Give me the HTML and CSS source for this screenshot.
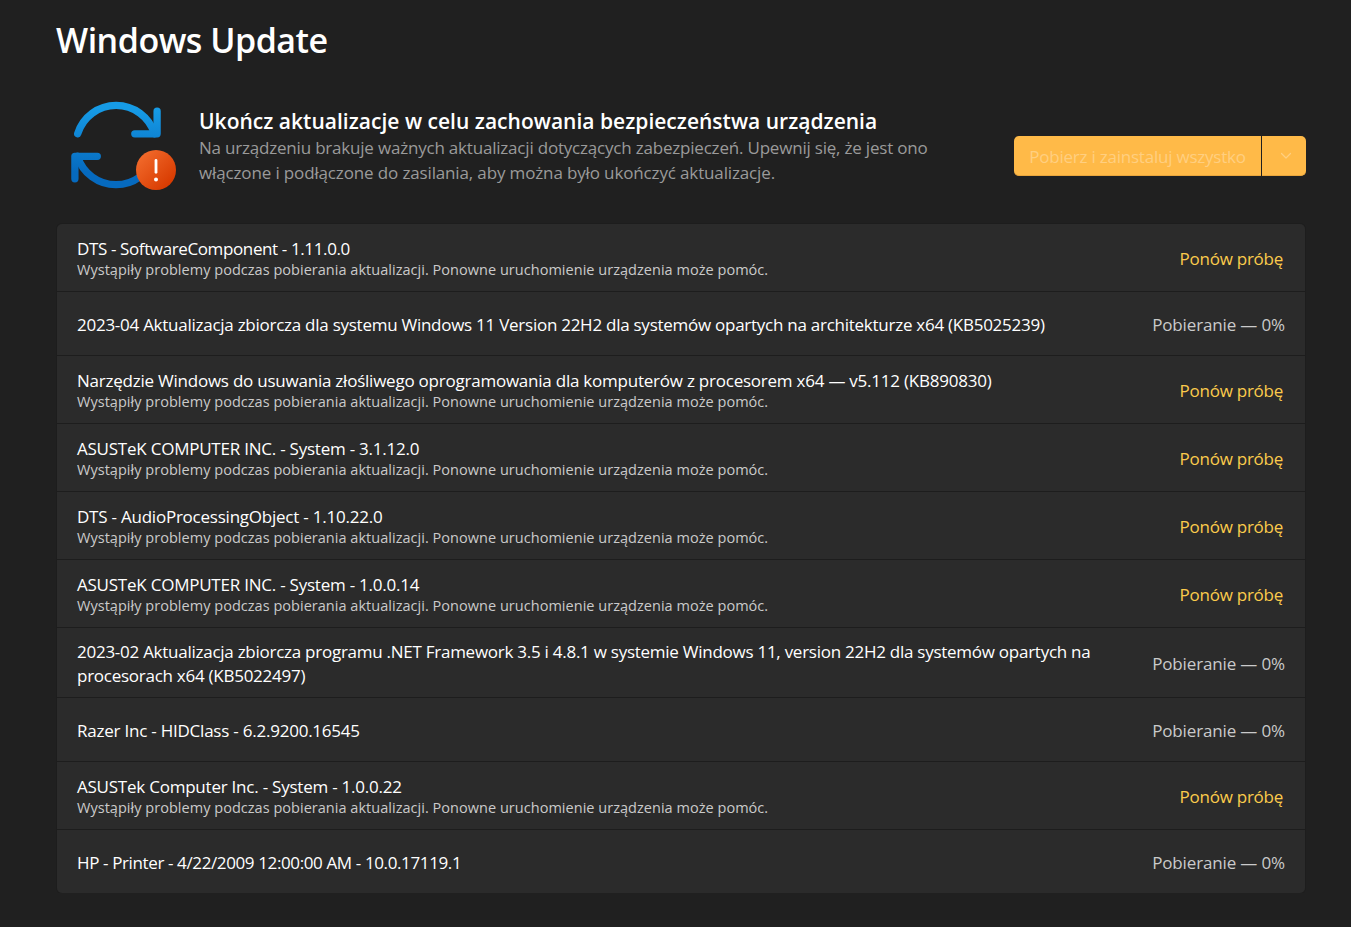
FILE: index.html
```
<!DOCTYPE html>
<html lang="pl">
<head>
  <meta charset="UTF-8">
  <meta name="viewport" content="width=device-width, initial-scale=1.0">
  <title>Windows Update</title>
  <link rel="stylesheet" href="styles.css">
</head>
<body>
  <h1>Windows Update</h1>

  <!-- Status header -->
  <header class="status">
    <svg class="status-icon" width="108" height="92" viewBox="0 0 108 92" fill="none">
      <defs>
        <linearGradient id="blue" gradientUnits="userSpaceOnUse" x1="0" y1="0" x2="0" y2="90">
          <stop offset="0.1" stop-color="#169be6"/>
          <stop offset="0.8" stop-color="#066abf"/>
        </linearGradient>
        <linearGradient id="orange" x1="0" y1="0" x2="1" y2="1">
          <stop offset="0.1" stop-color="#f26b2c"/>
          <stop offset="0.85" stop-color="#d83b01"/>
        </linearGradient>
      </defs>
      <g stroke="url(#blue)" stroke-width="7.3" stroke-linecap="round" stroke-linejoin="round">
        <path d="M7.7 33.7A40.2 40.2 0 0 1 84.5 33.7"/>
        <path d="M87.1 11.2V33.8H64.8"/>
        <path d="M7.5 56.3A40.3 40.3 0 0 0 84.5 56.3"/>
        <path d="M27.3 56.3H4.9V78.8"/>
      </g>
      <circle cx="86" cy="70" r="20" fill="url(#orange)"/>
      <path d="M86 60.4V72.3" stroke="#fff" stroke-width="2.8" stroke-linecap="round"/>
      <circle cx="86" cy="79.4" r="2" fill="#fff"/>
    </svg>
    <div class="status-text">
      <h2>Ukończ aktualizacje w celu zachowania bezpieczeństwa urządzenia</h2>
      <p>
        <span>Na urządzeniu brakuje ważnych aktualizacji dotyczących zabezpieczeń. Upewnij się, że jest ono</span>
        <span>włączone i podłączone do zasilania, aby można było ukończyć aktualizacje.</span>
      </p>
    </div>
    <div class="split-button">
      <button class="install" type="button" disabled>Pobierz i zainstaluj wszystko</button>
      <button class="more" type="button" disabled>
        <svg width="12" height="8" viewBox="0 0 12 8" fill="none" stroke="currentColor" stroke-width="1.2" stroke-linecap="round" stroke-linejoin="round"><path d="M1.5 1.5L6 6l4.5-4.5"/></svg>
      </button>
    </div>
  </header>

  <!-- Update list -->
  <ul class="updates">
    <li class="failed">
      <div class="info">
        <h3 class="tight">DTS - SoftwareComponent - 1.11.0.0</h3>
        <p>Wystąpiły problemy podczas pobierania aktualizacji. Ponowne uruchomienie urządzenia może pomóc.</p>
      </div>
      <a class="retry">Ponów próbę</a>
    </li>
    <li>
      <h3 class="snug">2023-04 Aktualizacja zbiorcza dla systemu Windows 11 Version 22H2 dla systemów opartych na architekturze x64 (KB5025239)</h3>
      <span class="progress">Pobieranie — 0%</span>
    </li>
    <li class="failed">
      <div class="info">
        <h3>Narzędzie Windows do usuwania złośliwego oprogramowania dla komputerów z procesorem x64 — v5.112 (KB890830)</h3>
        <p>Wystąpiły problemy podczas pobierania aktualizacji. Ponowne uruchomienie urządzenia może pomóc.</p>
      </div>
      <a class="retry">Ponów próbę</a>
    </li>
    <li class="failed">
      <div class="info">
        <h3>ASUSTeK COMPUTER INC. - System - 3.1.12.0</h3>
        <p>Wystąpiły problemy podczas pobierania aktualizacji. Ponowne uruchomienie urządzenia może pomóc.</p>
      </div>
      <a class="retry">Ponów próbę</a>
    </li>
    <li class="failed">
      <div class="info">
        <h3>DTS - AudioProcessingObject - 1.10.22.0</h3>
        <p>Wystąpiły problemy podczas pobierania aktualizacji. Ponowne uruchomienie urządzenia może pomóc.</p>
      </div>
      <a class="retry">Ponów próbę</a>
    </li>
    <li class="failed">
      <div class="info">
        <h3>ASUSTeK COMPUTER INC. - System - 1.0.0.14</h3>
        <p>Wystąpiły problemy podczas pobierania aktualizacji. Ponowne uruchomienie urządzenia może pomóc.</p>
      </div>
      <a class="retry">Ponów próbę</a>
    </li>
    <li class="two-line">
      <h3 class="snug">2023-02 Aktualizacja zbiorcza programu .NET Framework 3.5 i 4.8.1 w systemie Windows 11, version 22H2 dla systemów opartych na procesorach x64 (KB5022497)</h3>
      <span class="progress">Pobieranie — 0%</span>
    </li>
    <li>
      <h3>Razer Inc - HIDClass - 6.2.9200.16545</h3>
      <span class="progress">Pobieranie — 0%</span>
    </li>
    <li class="failed">
      <div class="info">
        <h3>ASUSTek Computer Inc. - System - 1.0.0.22</h3>
        <p>Wystąpiły problemy podczas pobierania aktualizacji. Ponowne uruchomienie urządzenia może pomóc.</p>
      </div>
      <a class="retry">Ponów próbę</a>
    </li>
    <li>
      <h3 class="tight">HP - Printer - 4/22/2009 12:00:00 AM - 10.0.17119.1</h3>
      <span class="progress">Pobieranie — 0%</span>
    </li>
  </ul>
</body>
</html>
```
FILE: styles.css
```
* {
  box-sizing: border-box;
}
body {
  margin: 0;
  padding: 16px 45px 0 56px;
  background: #202020;
  color: #fff;
  font-family: "Open Sans", "Noto Sans", sans-serif;
  font-size: 17px;
}
h1, h2, h3, p, ul {
  margin: 0;
  padding: 0;
}
h1 {
  font-size: 34px;
  font-weight: 600;
  line-height: 48px;
  letter-spacing: -0.5px;
}

/* Status header */
.status {
  display: flex;
  align-items: center;
  height: 92px;
  margin-top: 36px;
  padding-left: 14px;
}
.status-icon {
  flex: none;
}
.status-text {
  flex: 1;
  margin-left: 21px;
  white-space: nowrap;
}
.status-text h2 {
  font-size: 21px;
  font-weight: 600;
  line-height: 28px;
  letter-spacing: 0.02px;
}
.status-text p {
  color: #9a9a9a;
  line-height: 25px;
  letter-spacing: -0.2px;
}
.status-text span {
  display: block;
}
.status-text span + span {
  letter-spacing: -0.14px;
}

.split-button {
  display: flex;
  gap: 1px;
  height: 40px;
  margin-top: 20px;
}
.split-button button {
  display: flex;
  align-items: center;
  justify-content: center;
  padding: 1px 0 0;
  border: none;
  border-bottom: 1px solid #eaa63c;
  background: #ffba48;
  color: #ffcf80;
  font: inherit;
  letter-spacing: -0.22px;
}
.install {
  width: 247px;
  border-radius: 5px 0 0 5px;
}
.more {
  width: 44px;
  border-radius: 0 5px 5px 0;
}
.split-button .more {
  padding-left: 3px;
}

/* Update list */
.updates {
  margin: 32px 1px 0;
  border-radius: 5px;
  background: #2b2b2b;
  box-shadow: 0 0 0 1px #1d1d1d;
  list-style: none;
}
.updates li {
  display: flex;
  align-items: center;
  justify-content: space-between;
  height: 64px;
  padding: 2px 20px 0 20px;
  border-bottom: 1px solid #1d1d1d;
}
.updates li:last-child {
  height: 63px;
  border-bottom: none;
}
.updates .failed {
  height: 68px;
  padding: 1px 22px 0 20px;
}
.updates .two-line {
  height: 70px;
}
.updates h3 {
  max-width: 1030px;
  font-size: 17px;
  font-weight: 400;
  line-height: 24px;
  letter-spacing: -0.23px;
}
.updates .snug {
  letter-spacing: -0.26px;
}
.updates .tight {
  letter-spacing: -0.38px;
}
.updates p {
  color: #cacaca;
  font-size: 14.5px;
  line-height: 18px;
  letter-spacing: 0.03px;
}
.retry {
  color: #fccb4c;
  letter-spacing: -0.25px;
}
.progress {
  color: #cacaca;
  letter-spacing: -0.14px;
}
```
